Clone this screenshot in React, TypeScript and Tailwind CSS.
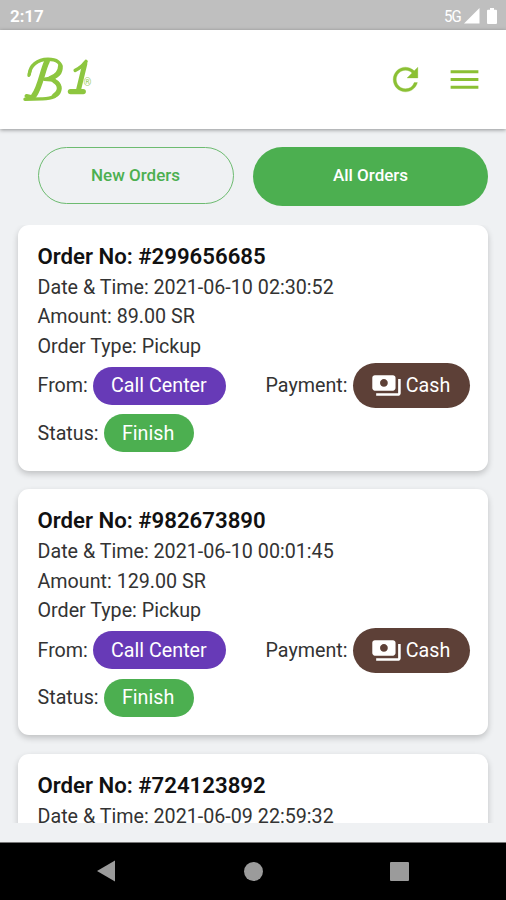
type Order = { no: string; time: string; amount?: string };

const orders: Order[] = [
  { no: "#299656685", time: "2021-06-10 02:30:52", amount: "89.00 SR" },
  { no: "#982673890", time: "2021-06-10 00:01:45", amount: "129.00 SR" },
  { no: "#724123892", time: "2021-06-09 22:59:32" },
];

function StatusBar() {
  return (
    <div className="flex h-[30px] shrink-0 items-center justify-between bg-[#bfbfbf] pl-[10px] pr-[9px] pt-px text-white">
      <span className="text-[17px] font-semibold leading-5">2:17</span>
      <div className="flex items-center">
        <span className="origin-right scale-y-110 text-[15px] leading-5 tracking-[-0.8px]">5G</span>
        <svg className="ml-[3px] h-4 w-4" viewBox="0 0 16 16" fill="currentColor">
          <path d="M0 15.5 15.5 0v15.5z" />
        </svg>
        <svg className="ml-[7px] h-4 w-[10px]" viewBox="0 0 10 16" fill="currentColor">
          <path d="M3 0h4v1.8h2q1 0 1 1V15q0 1-1 1H1q-1 0-1-1V2.8q0-1 1-1h2z" />
        </svg>
      </div>
    </div>
  );
}

function Logo() {
  return (
    <svg className="h-[48px] w-[72px]" viewBox="22 55 72 48" fill="none" stroke="#8dc63f" strokeLinecap="round" strokeLinejoin="round">
      <path strokeWidth="3.4" d="M29.3 74C30 66 37 59.3 48 59.3C57 59.3 61.5 63 61 68.5C60.5 75 54 78.5 44.5 79.3C54 79.3 60 82.5 60 88.5C60 95.5 52 99 42 98.9L25 99.2" />
      <path strokeWidth="4.6" d="M60.3 66C60.3 73 56 76.3 50 78.5M54 80.8C61 85 60.5 91.500 54 95.8" />
      <path strokeWidth="3" d="M30.2 71 28.8 75.5" />
      <path strokeWidth="5.6" d="M47 61.5C42.500 70 40.500 87 34 95.5" />
      <path strokeWidth="4" d="M26.5 96 33 97.500" />
      <path strokeWidth="3.6" d="M75.2 70.3C79.5 68.500 83 65.500 86 61.5" />
      <path strokeWidth="5" d="M84.8 64 78.5 90" />
      <path strokeWidth="5.4" d="M70.5 91.6H83.2" />
      <text x="83.5" y="86" fill="#8dc63f" stroke="none" fontSize="10" opacity=".85">®</text>
    </svg>
  );
}

function Header() {
  return (
    <header className="z-10 flex h-[98.5px] shrink-0 items-center bg-white pl-[22px] pr-[23px] text-[#8bc034] shadow-[0_1px_4px_rgba(0,0,0,0.4)]">
      <Logo />
      <svg className="ml-auto h-[37px] w-[37px]" viewBox="0 0 24 24" fill="currentColor" stroke="currentColor" strokeWidth="0.2">
        <path d="M17.65 6.35A7.958 7.958 0 0 0 12 4c-4.42 0-7.99 3.58-7.99 8s3.57 8 7.99 8c3.73 0 6.84-2.55 7.73-6h-2.08A5.99 5.99 0 0 1 12 18c-3.31 0-6-2.69-6-6s2.69-6 6-6c1.66 0 3.14.69 4.22 1.78L13 11h7V4z" />
      </svg>
      <svg className="ml-[22.5px] h-[37px] w-[37px]" viewBox="0 0 24 24" fill="currentColor">
        <path d="M3 18h18v-2H3zm0-5h18v-2H3zm0-7v2h18V6z" />
      </svg>
    </header>
  );
}

function PaymentsIcon() {
  return (
    <svg className="h-[31px] w-[31px]" viewBox="0 0 24 24" fill="currentColor">
      <path d="M19 14V6c0-1.1-.9-2-2-2H3c-1.1 0-2 .9-2 2v8c0 1.1.9 2 2 2h14c1.1 0 2-.9 2-2zm-9-1c-1.66 0-3-1.34-3-3s1.34-3 3-3 3 1.34 3 3-1.34 3-3 3zm13-6v11c0 1.1-.9 2-2 2H4v-2h17V7h2z" />
    </svg>
  );
}

function OrderCard({ order }: { order: Order }) {
  return (
    <article className="h-[246px] shrink-0 rounded-[11px] bg-white pl-[19.5px] pr-[18.5px] pt-[17px] text-[19.7px] leading-[29.5px] text-[#333] shadow-[0_3px_6px_rgba(0,0,0,0.2)]">
      <h2 className="pb-[1.5px] text-[22.2px] font-semibold text-[#111]">Order No: {order.no}</h2>
      <p>Date &amp; Time: {order.time}</p>
      {order.amount && (
        <>
          <p>Amount: {order.amount}</p>
          <p>Order Type: Pickup</p>
          <div className="mt-[2px] flex h-[45px] items-center">
            <span className="pt-px">From:</span>
            <span className="ml-[5px] flex h-[38px] w-[133px] items-center justify-center rounded-full bg-[#673ab7] pr-px pt-px text-white">Call Center</span>
            <span className="ml-auto pt-px">Payment:</span>
            <span className="ml-[5px] flex h-[45px] w-[117px] items-center justify-center gap-[4px] rounded-full bg-[#5d4037] pr-px text-white">
              <PaymentsIcon />
              <span className="pt-px">Cash</span>
            </span>
          </div>
          <div className="mt-[6px] flex h-[38px] items-center">
            <span className="pt-px">Status:</span>
            <span className="ml-[5px] flex h-[38px] w-[90px] items-center justify-center rounded-full bg-[#4caf50] pr-px pt-px text-white">Finish</span>
          </div>
        </>
      )}
    </article>
  );
}

function NavBar() {
  return (
    <nav className="flex h-[58.5px] shrink-0 items-center border-t border-[#777] bg-black px-[97px] text-[#9b9b9b]">
      <svg className="h-[22px] w-[18px]" viewBox="0 0 18 22" fill="currentColor">
        <path d="M0 11 18 .5v21z" />
      </svg>
      <span className="ml-[129px] h-[18.5px] w-[18.5px] rounded-full bg-[#9b9b9b]" />
      <span className="ml-auto h-[19px] w-[19px] rounded-[1px] bg-[#9b9b9b]" />
    </nav>
  );
}

export default function App() {
  return (
    <div className="flex h-[900px] w-[506px] flex-col overflow-hidden bg-[#eff1f3] font-[Roboto,sans-serif]">
      <StatusBar />
      <Header />
      <main className="flex min-h-0 flex-1 flex-col">
        <div className="flex h-[96px] shrink-0 items-start pl-[38px] pr-[18px] pt-[18px] text-[17px] font-medium">
          <button className="h-[57.5px] w-[196px] rounded-full border-[1.4px] border-[#6dbb70] pr-px text-[#4caf50]">New Orders</button>
          <button className="ml-auto h-[59.5px] w-[235px] rounded-full bg-[#4caf50] pb-[2px] text-white">All Orders</button>
        </div>
        <div className="mb-[18.5px] flex min-h-0 flex-1 flex-col gap-[18.5px] overflow-hidden px-[18px]">
          {orders.map((o) => (
            <OrderCard key={o.no} order={o} />
          ))}
        </div>
      </main>
      <NavBar />
    </div>
  );
}
